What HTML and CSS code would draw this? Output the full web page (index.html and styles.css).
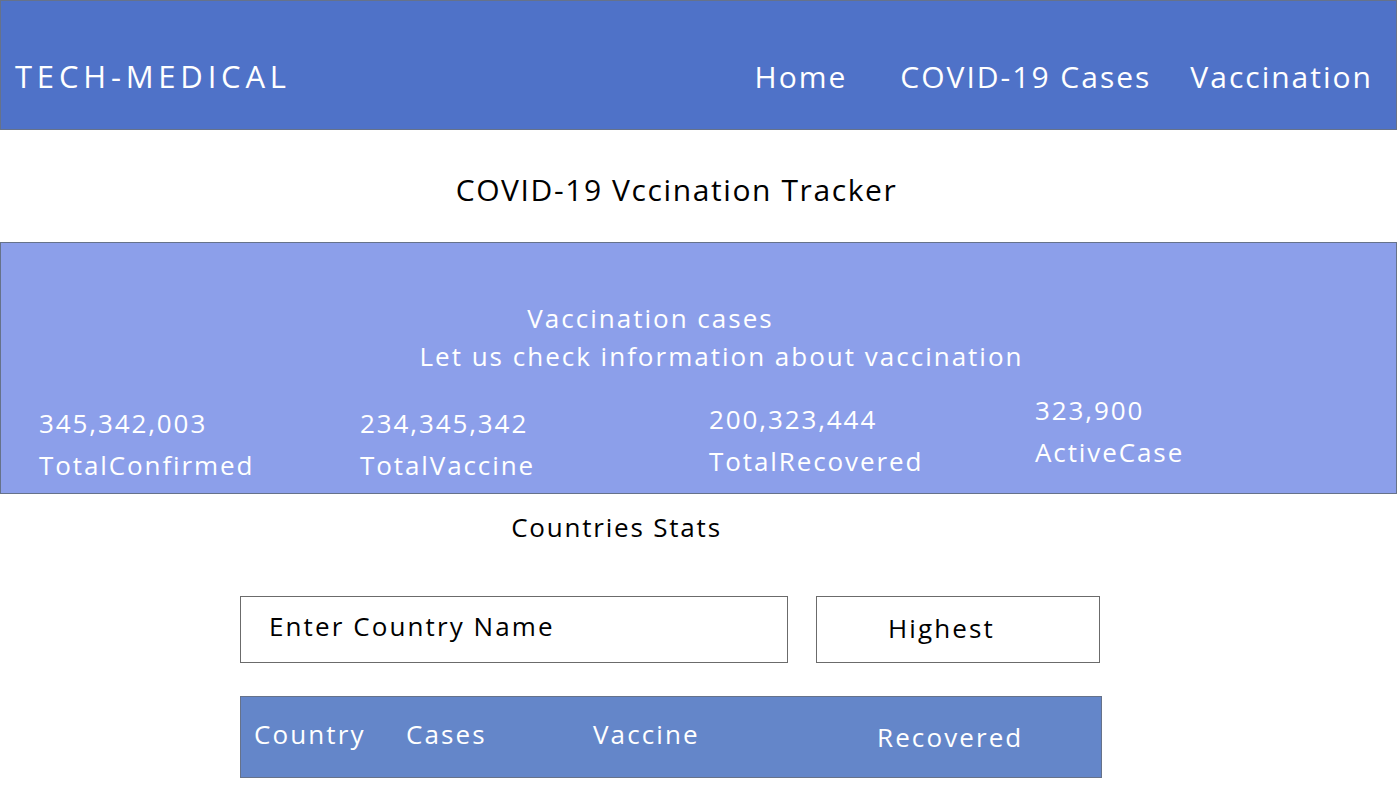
FILE: index.html
```html
<!DOCTYPE html>
<html lang="en">
<head>
<meta charset="utf-8">
<title>TECH-MEDICAL</title>
<link rel="stylesheet" href="styles.css">
</head>
<body>
<header class="topbar">
  <div class="brand">TECH-MEDICAL</div>
  <nav class="nav">
    <a class="nav-home" href="#">Home</a>
    <a class="nav-cases" href="#">COVID-19 Cases</a>
    <a class="nav-vacc" href="#">Vaccination</a>
  </nav>
</header>
<h1 class="page-title">COVID-19 Vccination Tracker</h1>
<section class="panel">
  <div class="panel-head">
    <div class="panel-title">Vaccination cases</div>
    <div class="panel-sub">Let us check information about vaccination</div>
  </div>
  <div class="stats">
    <div class="stat s1"><div>345,342,003</div><div>TotalConfirmed</div></div>
    <div class="stat s2"><div>234,345,342</div><div>TotalVaccine</div></div>
    <div class="stat s3"><div>200,323,444</div><div>TotalRecovered</div></div>
    <div class="stat s4"><div>323,900</div><div>ActiveCase</div></div>
  </div>
</section>
<h2 class="section-title">Countries Stats</h2>
<div class="controls">
  <div class="search">Enter Country Name</div>
  <div class="select">Highest</div>
</div>
<div class="table-head">
  <span class="th th-country">Country</span>
  <span class="th th-cases">Cases</span>
  <span class="th th-vaccine">Vaccine</span>
  <span class="th th-recovered">Recovered</span>
</div>
</body>
</html>
```
FILE: styles.css
```css
* { box-sizing: border-box; }
html, body { margin: 0; padding: 0; background: #fff; }
body {
  font-family: "Open Sans", "Noto Sans", sans-serif;
  color: #000;
  width: 1397px;
  height: 797px;
  overflow: hidden;
}
.topbar {
  height: 130px;
  background: #4f72c8;
  border: 1px solid #66728a;
  display: flex;
  align-items: center;
  padding: 0 0 0 14px;
  color: #fff;
}
.brand {
  font-size: 31px;
  letter-spacing: 4.8px;
  padding-top: 22px;
}
.nav {
  margin-left: auto;
  display: flex;
  padding-top: 22px;
}
.nav a {
  color: #fff;
  text-decoration: none;
  font-size: 30px;
  letter-spacing: 2px;
}
.nav-home { margin-right: 53px; letter-spacing: 2.8px; }
.nav-cases { margin-right: 39px; }
.nav-vacc { margin-right: 23px; letter-spacing: 0.5px; }
.page-title {
  margin: 0;
  height: 112px;
  padding-top: 40px;
  padding-right: 44px;
  text-align: center;
  font-weight: 400;
  font-size: 30px;
  line-height: 40px;
  letter-spacing: 1.6px;
}
.panel {
  height: 252px;
  background: #8c9fea;
  border: 1px solid #66728a;
  color: #fff;
  padding-top: 56px;
}
.panel-head {
  text-align: center;
  font-size: 26px;
  line-height: 38px;
  letter-spacing: 2px;
}
.panel-title { padding-right: 96px; }
.panel-sub { padding-left: 46px; }
.stats {
  display: grid;
  grid-template-columns: 321px 349px 326px 1fr;
  padding-left: 38px;
  margin-top: 27px;
  font-size: 26px;
  line-height: 42px;
  letter-spacing: 1.9px;
}
.s3 { margin-top: -4px; }
.s4 { margin-top: -13px; }
.section-title {
  margin: 0;
  height: 102px;
  padding-top: 13px;
  padding-right: 164px;
  text-align: center;
  font-weight: 400;
  font-size: 26px;
  line-height: 40px;
  letter-spacing: 1.8px;
}
.controls {
  display: flex;
  padding-left: 240px;
  gap: 28px;
}
.search, .select {
  height: 67px;
  border: 1px solid #6b6b6b;
  font-size: 26px;
  letter-spacing: 2.1px;
  display: flex;
  align-items: center;
}
.search { width: 548px; padding-left: 28px; padding-bottom: 8px; }
.select { width: 284px; padding-left: 71px; padding-bottom: 3px; }
.table-head {
  margin: 33px 0 0 240px;
  width: 862px;
  height: 82px;
  background: #6486c9;
  border: 1px solid #66728a;
  color: #fff;
  font-size: 26px;
  letter-spacing: 2.1px;
  display: grid;
  grid-template-columns: 152px 187px 284px 1fr;
  align-items: center;
  padding: 0 0 6px 13px;
}
.th-recovered { padding-top: 6px; }
```
